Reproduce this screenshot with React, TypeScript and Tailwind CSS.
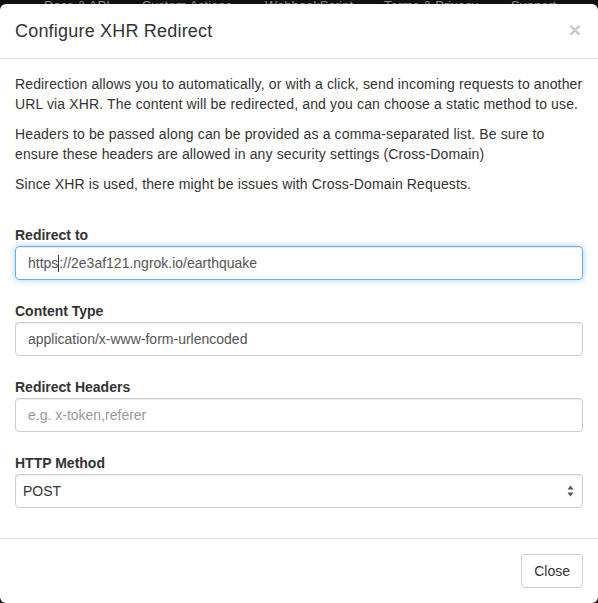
import React from "react";

function Group({ label, children }: { label: string; children: React.ReactNode }) {
  return (
    <div className="mt-[21px] flex flex-col">
      <label className="h-[20px] leading-[20px] mb-[1px] text-[14px] font-bold text-[#333]">{label}</label>
      {children}
    </div>
  );
}

export default function App() {
  const nav = [
    { t: "Docs & API", ml: "ml-[44px]" },
    { t: "Custom Actions", ml: "ml-[32px]" },
    { t: "WebhookScript", ml: "ml-[33px]" },
    { t: "Terms & Privacy", ml: "ml-[31px]" },
    { t: "Support", ml: "ml-[33px]" },
  ];
  return (
    <div className="w-[598px] h-[603px] bg-[#111] overflow-hidden flex flex-col font-['Liberation_Sans',Arial,sans-serif]">
      <div className="h-[4px] overflow-hidden flex items-end">
        <div className="flex mb-[-10px] text-[13px] leading-[16px] text-[#8a8a8a] whitespace-nowrap">
          {nav.map((n) => (
            <span key={n.t} className={n.ml}>{n.t}</span>
          ))}
        </div>
      </div>
      <div className="h-[599px] bg-white rounded-[6px] flex flex-col">
        <div className="h-[55px] border-b border-[#e5e5e5] px-[15px] flex items-center justify-between">
          <h4 className="text-[18px] leading-[26px] tracking-[0.2px] text-[#333]">Configure XHR Redirect</h4>
          <span className="text-[21px] font-bold leading-none text-[#c8c8c8] mr-[2px] mt-[-4px]">×</span>
        </div>
        <div className="h-[479px] px-[15px] pt-[15px] flex flex-col text-[14px] leading-[20px] text-[#333]">
          <p className="mb-[10px] tracking-[0.14px] whitespace-nowrap">
            Redirection allows you to automatically, or with a click, send incoming requests to another
            <br />
            URL via XHR. The content will be redirected, and you can choose a static method to use.
          </p>
          <p className="mb-[10px] tracking-[0.14px] whitespace-nowrap">
            Headers to be passed along can be provided as a comma-separated list. Be sure to
            <br />
            ensure these headers are allowed in any security settings (Cross-Domain)
          </p>
          <p className="mb-[10px] tracking-[0.14px]">Since XHR is used, there might be issues with Cross-Domain Requests.</p>

          <Group label="Redirect to">
            <div className="h-[34px] rounded-[4px] border border-[#66afe9] shadow-[inset_0_1px_1px_rgba(0,0,0,0.075),0_0_6px_rgba(102,175,233,0.6)] px-[12px] flex items-center text-[#555]">
              <span>https</span>
              <span className="inline-block w-[1px] h-[17px] bg-[#333]" />
              <span>://2e3af121.ngrok.io/earthquake</span>
            </div>
          </Group>
          <Group label="Content Type">
            <div className="h-[34px] rounded-[4px] border border-[#ccc] shadow-[inset_0_1px_1px_rgba(0,0,0,0.075)] px-[12px] flex items-center text-[#555]">
              application/x-www-form-urlencoded
            </div>
          </Group>
          <Group label="Redirect Headers">
            <div className="h-[34px] rounded-[4px] border border-[#ccc] shadow-[inset_0_1px_1px_rgba(0,0,0,0.075)] px-[12px] flex items-center text-[#999]">
              e.g. x-token,referer
            </div>
          </Group>
          <Group label="HTTP Method">
            <div className="h-[34px] rounded-[4px] border border-[#ccc] shadow-[inset_0_1px_1px_rgba(0,0,0,0.075)] pl-[7px] pr-[8px] flex items-center justify-between text-[#333]">
              <span>POST</span>
              <svg width="7" height="12" viewBox="0 0 7 12">
                <path d="M3.5 0.5 L6.5 4.5 L0.5 4.5 Z" fill="#555" />
                <path d="M3.5 11.5 L6.5 7.5 L0.5 7.5 Z" fill="#555" />
              </svg>
            </div>
          </Group>
        </div>
        <div className="flex-1 border-t border-[#e5e5e5] px-[15px] pt-[15px] flex justify-end items-start">
          <button className="h-[34px] px-[12px] rounded-[4px] border border-[#ccc] bg-white text-[14px] text-[#333]">
            Close
          </button>
        </div>
      </div>
    </div>
  );
}
